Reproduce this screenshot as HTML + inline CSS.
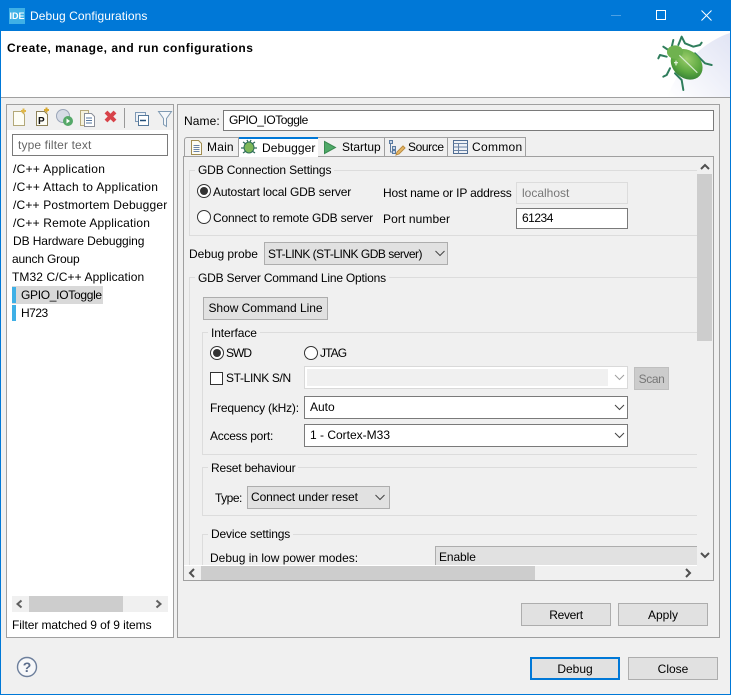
<!DOCTYPE html>
<html><head><meta charset="utf-8"><style>
html,body{margin:0;padding:0;width:731px;height:695px;overflow:hidden;background:#f0f0f0}
body{position:relative;font-family:"Liberation Sans",sans-serif;font-size:12px;color:#000}
.a,.t,svg{position:absolute}
.t{white-space:nowrap;line-height:14px;height:14px}
.a{box-sizing:border-box}
.btn{box-sizing:border-box;position:absolute;background:#e1e1e1;border:1px solid #adadad;text-align:center;line-height:21px;font-size:12px}
.inp{box-sizing:border-box;position:absolute;background:#fff;border:1px solid #7a7a7a;padding-left:5px;line-height:19px;white-space:nowrap}
.grp{position:absolute;box-sizing:border-box;border:1px solid #dcdcdc}
.lab{position:absolute;background:#f0f0f0;padding:0 3px;line-height:14px;white-space:nowrap}
.li{left:12px}
</style></head><body>
<!-- window frame -->
<div class="a" style="left:0;top:0;width:731px;height:31px;background:#0078d7"></div>
<div class="a" style="left:0;top:0;width:1px;height:695px;background:#0078d7"></div>
<div class="a" style="left:730px;top:0;width:1px;height:695px;background:#0078d7"></div>
<div class="a" style="left:0;top:694px;width:731px;height:1px;background:#0078d7"></div>
<div class="a" style="left:9px;top:8px;width:16px;height:16px;background:#3fb0e6;color:#fff;font-size:9px;font-weight:bold;line-height:16px;text-align:center">IDE</div>
<div class="t" style="left:30px;top:9px;color:#fff;letter-spacing:.07px">Debug Configurations</div>
<div class="a" style="left:611px;top:15px;width:10px;height:1px;background:#4da0e3"></div>
<div class="a" style="left:656px;top:10px;width:10px;height:10px;border:1px solid #fff"></div>
<svg style="left:701px;top:10px" width="11" height="11"><path d="M.5.5l10 10M10.5.5l-10 10" stroke="#fff" fill="none"/></svg>
<!-- header -->
<div class="a" style="left:1px;top:31px;width:729px;height:66px;background:#fff"></div>
<svg style="left:655px;top:31px" width="75" height="66"><defs><linearGradient id="g" x1="0" y1="1" x2="1" y2="0"><stop offset="0" stop-color="#fff"/><stop offset="1" stop-color="#e1e4f4"/></linearGradient><radialGradient id="b" cx=".4" cy=".35" r=".75"><stop offset="0" stop-color="#9ccd6c"/><stop offset=".6" stop-color="#5aa73f"/><stop offset="1" stop-color="#2f7a35"/></radialGradient></defs>
<path d="M75 2C50 10 26 32 12 66H75Z" fill="url(#g)"/>
<g transform="translate(-5,-1) scale(.3333)">
<g fill="none" stroke="#2f7d5c" stroke-width="6" stroke-linecap="round" stroke-linejoin="round"><path d="M65 52L70 30"/><path d="M85 45L95 20 105 40 130 50 150 45 155 38"/><path d="M135 70L150 85 165 100 185 105"/><path d="M55 60L40 50"/><path d="M50 80L30 75 25 85"/><path d="M60 115L50 135 40 140"/><path d="M75 130L95 150 100 180"/></g>
<ellipse cx="110" cy="103" rx="52" ry="41" transform="rotate(40 110 103)" fill="url(#b)"/>
<ellipse cx="75" cy="66" rx="24" ry="20" fill="#6fb24f"/>
<path d="M88 76L142 128" stroke="#d5eccf" stroke-width="3.500"/><path d="M72 98h12M78 92v14" stroke="#e6f4e0" stroke-width="3.500"/>
</g></svg>
<div class="t" style="left:7px;top:41px;font-weight:bold;letter-spacing:.52px">Create, manage, and run configurations</div>
<div class="a" style="left:1px;top:97px;width:729px;height:1px;background:#a0a0a0"></div>

<!-- left panel -->
<div class="a" style="left:6px;top:104px;width:168px;height:534px;border:1px solid #a0a0a0;background:#fff"></div>
<div class="a" style="left:7px;top:105px;width:166px;height:25px;background:#f0f0f0"></div>
<svg style="left:7px;top:105px" width="167" height="25">
<path d="M6.500 6.500h8l3 3v11h-11z" fill="#fdfdf5" stroke="#b3a878"/><path d="M14 6h5M16.500 3.500v5" stroke="#e0b84a" stroke-width="2"/>
<path d="M29.500 6.500h8l3 3v11h-11z" fill="#fdfdf5" stroke="#8b8058"/><text x="31" y="19" font-family="Liberation Sans" font-size="10" font-weight="bold" fill="#111">P</text><path d="M37 5h5M39.500 2.500v5" stroke="#d8a930" stroke-width="2"/>
<circle cx="56" cy="11" r="6.500" fill="#d7dce6" stroke="#9aa5b8"/><circle cx="61" cy="16" r="5" fill="#55a868"/><path d="M59.500 13.500l3.500 2.500-3.500 2.500z" fill="#fff"/>
<path d="M73.500 5.500h8l0 15h-8z" fill="#f5f1dc" stroke="#b7a97a"/><path d="M77.500 8.500h7l3 3v10h-10z" fill="#fff" stroke="#8b8f9a"/><path d="M79 13h6M79 15.500h6M79 18h6" stroke="#5577a0"/>
<path d="M99 7l9 9M108 7l-9 9" stroke="#d8434a" stroke-width="4"/>
<path d="M117.500 3v20" stroke="#999"/>
<rect x="128.500" y="7.500" width="10" height="9" fill="#eef2f7" stroke="#7d98b5"/><rect x="131.500" y="10.500" width="10" height="10" fill="#fff" stroke="#55789a"/><path d="M133 15.500h6" stroke="#224e78" stroke-width="1.500"/>
<path d="M151.500 6.500h13l-5 7v8l-3-2v-6z" fill="#f4f7fa" stroke="#7f9ab3"/>
</svg>
<div class="inp" style="left:12px;top:134px;width:156px;height:22px;color:#666;line-height:20px;letter-spacing:.13px">type filter text</div>
<div class="t li" style="top:162px;left:13px;letter-spacing:.3px">/C++ Application</div>
<div class="t li" style="top:180px;left:13px;letter-spacing:.3px">/C++ Attach to Application</div>
<div class="t li" style="top:198px;left:13px;letter-spacing:.18px">/C++ Postmortem Debugger</div>
<div class="t li" style="top:216px;left:13px;letter-spacing:.19px">/C++ Remote Application</div>
<div class="t li" style="top:234px;left:13px;letter-spacing:-.1px">DB Hardware Debugging</div>
<div class="t li" style="top:252px;left:12px;letter-spacing:-.17px">aunch Group</div>
<div class="t li" style="top:270px;left:12px;letter-spacing:.1px">TM32 C/C++ Application</div>
<div class="a" style="left:12px;top:286px;width:91px;height:18px;background:#d9d9d9"></div>
<div class="a" style="left:12px;top:287px;width:4px;height:16px;background:#3fb0e6"></div>
<div class="a" style="left:12px;top:305px;width:4px;height:16px;background:#3fb0e6"></div>
<div class="t" style="left:21px;top:288px;letter-spacing:-.3px">GPIO_IOToggle</div>
<div class="t" style="left:21px;top:306px;letter-spacing:-.5px">H723</div>
<div class="a" style="left:12px;top:596px;width:156px;height:16px;background:#f0f0f0"></div>
<div class="a" style="left:29px;top:596px;width:94px;height:16px;background:#cdcdcd"></div>
<svg style="left:12px;top:596px" width="156" height="16"><path d="M9.500 4.500l-4 3.500 4 3.500M144.500 4.500l4 3.500-4 3.500" fill="none" stroke="#606060" stroke-width="2"/></svg>
<div class="t" style="left:12px;top:618px;letter-spacing:-.07px">Filter matched 9 of 9 items</div>

<!-- right panel -->
<div class="a" style="left:177px;top:104px;width:543px;height:534px;border:1px solid #a0a0a0;background:#f0f0f0"></div>
<div class="t" style="left:184px;top:114px;letter-spacing:.1px">Name:</div>
<div class="inp" style="left:223px;top:110px;width:491px;height:21px;padding-left:5px;letter-spacing:-.45px">GPIO_IOToggle</div>

<!-- tab folder -->
<div class="a" style="left:183px;top:156px;width:531px;height:425px;border:1px solid #a0a0a0;background:#f0f0f0"></div>
<div class="a" style="left:184px;top:137px;width:342px;height:20px;background:#f0f0f0;border:1px solid #a0a0a0;border-radius:3px 0 0 0"></div>
<div class="a" style="left:238px;top:138px;width:1px;height:18px;background:#a0a0a0"></div>
<div class="a" style="left:384px;top:138px;width:1px;height:18px;background:#a0a0a0"></div>
<div class="a" style="left:447px;top:138px;width:1px;height:18px;background:#a0a0a0"></div>
<div class="a" style="left:239px;top:137px;width:79px;height:21px;background:#fff;border-top:2px solid #0078d7"></div>
<svg style="left:183px;top:137px" width="345" height="20">
<path d="M8.500 3.500h7l3 3v11h-10z" fill="#fdfcf3" stroke="#a08c50"/><path d="M10.500 8.500h6M10.500 10.500h6M10.500 12.500h6M10.500 14.500h6" stroke="#6a83a8"/>
<ellipse cx="66" cy="10.500" rx="5" ry="5.500" fill="#7db758" stroke="#2e7058"/><path d="M60 5l3 2M72 5l-3 2M58 11h3M74 11h-3M60 16l3-2M72 16l-3-2M64 3l1 2M68 3l-1 2" stroke="#2e6c58" stroke-width="1.300"/>
<path d="M141.500 4.500l11 6-11 6z" fill="#4fa968" stroke="#3a8a50"/>
<path d="M206.500 3.500h3v3h-3zM209.500 9.500h3v3h-3zM209.500 13.500h3v3h-3z" fill="#c9d5e6" stroke="#5a7aa0"/><path d="M207.500 7v8h2" fill="none" stroke="#5a7aa0"/><path d="M213 18l1-3 6-6 2 2-6 6z" fill="#e6b766" stroke="#b98a3f"/>
<rect x="270.500" y="3.500" width="14" height="13" fill="#eef1f6" stroke="#4f6c92"/><path d="M270.500 6.500h14M275.500 6.500v10M270.500 10h14M270.500 13.500h14" stroke="#6b84a6"/>
</svg>
<div class="t" style="left:207px;top:140px;letter-spacing:.2px">Main</div>
<div class="t" style="left:262px;top:141px;letter-spacing:.1px">Debugger</div>
<div class="t" style="left:342px;top:140px;letter-spacing:0">Startup</div>
<div class="t" style="left:408px;top:140px;letter-spacing:-.4px">Source</div>
<div class="t" style="left:472px;top:140px;letter-spacing:.3px">Common</div>

<!-- scrolled content -->
<div class="a" style="left:184px;top:157px;width:513px;height:408px;overflow:hidden;background:#f0f0f0">
<div style="position:absolute;left:-184px;top:-157px;width:731px;height:695px">
<div class="grp" style="left:189px;top:170px;width:520px;height:66px"></div>
<div class="lab" style="left:195px;top:163px;letter-spacing:-.15px">GDB Connection Settings</div>
<svg style="left:197px;top:184px" width="14" height="14"><circle cx="7" cy="7" r="6.500" fill="#fff" stroke="#333"/><circle cx="7" cy="7" r="4" fill="#333"/></svg>
<div class="t" style="left:213px;top:185px;letter-spacing:-.15px">Autostart local GDB server</div>
<svg style="left:197px;top:210px" width="14" height="14"><circle cx="7" cy="7" r="6.500" fill="#fff" stroke="#333"/></svg>
<div class="t" style="left:213px;top:211px;letter-spacing:-.17px">Connect to remote GDB server</div>
<div class="t" style="left:383px;top:186px;letter-spacing:-.17px">Host name or IP address</div>
<div class="t" style="left:383px;top:212px;letter-spacing:.1px">Port number</div>
<div class="inp" style="left:516px;top:182px;width:112px;height:22px;background:#f0f0f0;border-color:#dcdcdc;color:#777;line-height:20px">localhost</div>
<div class="inp" style="left:516px;top:208px;width:112px;height:21px;line-height:19px;letter-spacing:-.5px">61234</div>
<div class="t" style="left:189px;top:247px;letter-spacing:-.05px">Debug probe</div>
<div class="inp" style="left:264px;top:242px;width:184px;height:23px;background:#e1e1e1;border-color:#adadad;padding-left:3px;line-height:23px;letter-spacing:-.5px">ST-LINK (ST-LINK GDB server)</div>
<svg style="left:435px;top:250px" width="10" height="7"><path d="M.5 1l4.500 4.500L9.500 1" fill="none" stroke="#444"/></svg>
<div class="grp" style="left:189px;top:277px;width:520px;height:300px"></div>
<div class="lab" style="left:195px;top:271px;letter-spacing:-.2px">GDB Server Command Line Options</div>
<div class="btn" style="left:203px;top:297px;width:125px;height:23px;letter-spacing:-.04px">Show Command Line</div>
<div class="grp" style="left:202px;top:332px;width:510px;height:123px"></div>
<div class="lab" style="left:208px;top:326px;letter-spacing:-.1px">Interface</div>
<svg style="left:210px;top:346px" width="14" height="14"><circle cx="7" cy="7" r="6.500" fill="#fff" stroke="#333"/><circle cx="7" cy="7" r="4" fill="#333"/></svg>
<div class="t" style="left:226px;top:346px;letter-spacing:-1px">SWD</div>
<svg style="left:304px;top:346px" width="14" height="14"><circle cx="7" cy="7" r="6.500" fill="#fff" stroke="#333"/></svg>
<div class="t" style="left:320px;top:346px;letter-spacing:-.9px">JTAG</div>
<div class="a" style="left:210px;top:372px;width:13px;height:13px;background:#fff;border:1px solid #333"></div>
<div class="t" style="left:226px;top:371px;letter-spacing:-.35px">ST-LINK S/N</div>
<div class="inp" style="left:304px;top:366px;width:324px;height:23px;background:#fff;border-color:#d9d9d9"></div>
<div class="a" style="left:307px;top:369px;width:301px;height:17px;background:#f0f0f0"></div>
<svg style="left:614px;top:374px" width="11" height="7"><path d="M1 1l4.500 4.500L10 1" fill="none" stroke="#a0a0a0"/></svg>
<div class="btn" style="left:634px;top:367px;width:35px;height:23px;background:#cccccc;border-color:#bfbfbf;color:#777;letter-spacing:-.4px;line-height:23px">Scan</div>
<div class="t" style="left:210px;top:401px;letter-spacing:-.2px">Frequency (kHz):</div>
<div class="inp" style="left:304px;top:396px;width:324px;height:23px;line-height:21px">Auto</div>
<svg style="left:614px;top:404px" width="11" height="7"><path d="M1 1l4.500 4.500L10 1" fill="none" stroke="#444"/></svg>
<div class="t" style="left:210px;top:429px;letter-spacing:-.25px">Access port:</div>
<div class="inp" style="left:304px;top:424px;width:324px;height:23px;line-height:21px">1 - Cortex-M33</div>
<svg style="left:614px;top:432px" width="11" height="7"><path d="M1 1l4.500 4.500L10 1" fill="none" stroke="#444"/></svg>
<div class="grp" style="left:202px;top:467px;width:510px;height:49px"></div>
<div class="lab" style="left:208px;top:461px;letter-spacing:-.2px">Reset behaviour</div>
<div class="t" style="left:215px;top:491px;letter-spacing:-.5px">Type:</div>
<div class="inp" style="left:247px;top:486px;width:143px;height:23px;background:#e1e1e1;border-color:#adadad;padding-left:3px;line-height:21px;letter-spacing:-.1px">Connect under reset</div>
<svg style="left:375px;top:494px" width="10" height="7"><path d="M.5 1l4.500 4.500L9.500 1" fill="none" stroke="#444"/></svg>
<div class="grp" style="left:202px;top:534px;width:510px;height:60px"></div>
<div class="lab" style="left:208px;top:527px;letter-spacing:-.15px">Device settings</div>
<div class="t" style="left:210px;top:551px;letter-spacing:0">Debug in low power modes:</div>
<div class="inp" style="left:435px;top:546px;width:280px;height:30px;background:#e1e1e1;border-color:#adadad;padding-left:3px;line-height:21px;letter-spacing:-.1px">Enable</div>
</div></div>

<!-- scrollbars -->
<div class="a" style="left:697px;top:157px;width:16px;height:408px;background:#f0f0f0"></div>
<div class="a" style="left:697px;top:174px;width:15px;height:167px;background:#cdcdcd"></div>
<svg style="left:697px;top:160px" width="16" height="405"><path d="M4 9l4-4 4 4" fill="none" stroke="#505050" stroke-width="2"/><path d="M4 393l4 4 4-4" fill="none" stroke="#505050" stroke-width="2"/></svg>
<div class="a" style="left:184px;top:565px;width:529px;height:15px;background:#f0f0f0"></div>
<div class="a" style="left:184px;top:565px;width:513px;height:1px;background:#fff"></div>
<div class="a" style="left:201px;top:566px;width:334px;height:14px;background:#cdcdcd"></div>
<svg style="left:184px;top:566px" width="512" height="14"><path d="M10 3l-4 4 4 4M502 3l4 4-4 4" fill="none" stroke="#505050" stroke-width="2"/></svg>

<div class="btn" style="left:521px;top:603px;width:90px;height:23px;line-height:23px;letter-spacing:-.3px">Revert</div>
<div class="btn" style="left:618px;top:603px;width:90px;height:23px;line-height:23px">Apply</div>

<!-- footer -->
<svg style="left:16px;top:656px" width="22" height="22"><circle cx="11" cy="11" r="9.500" fill="#f7f8fa" stroke="#6d7f9c" stroke-width="1.400"/><text x="11" y="16" text-anchor="middle" font-family="Liberation Sans" font-size="14" font-weight="bold" fill="#5b6d8c">?</text></svg>
<div class="btn" style="left:530px;top:657px;width:90px;height:23px;border:2px solid #0078d7;line-height:21px">Debug</div>
<div class="btn" style="left:628px;top:657px;width:90px;height:23px;line-height:23px">Close</div>
</body></html>
